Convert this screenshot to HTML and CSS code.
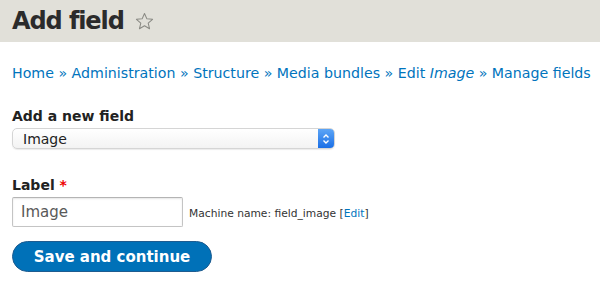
FILE: index.html
```html
<!DOCTYPE html>
<html lang="en">
<head>
  <meta charset="UTF-8">
  <title>Add field</title>
  <link rel="stylesheet" href="styles.css">
</head>
<body>
  <div class="page-header">
    <h1 class="page-title">Add field</h1>
    <span class="shortcut">
      <svg width="19" height="19" viewBox="0 0 20 20">
        <path d="M10 1.6 12.5 7.2 18.5 7.7 13.9 11.7 15.3 17.6 10 14.5 4.7 17.6 6.1 11.7 1.5 7.7 7.5 7.2Z" fill="none" stroke="#8a8a84" stroke-width="1.1" stroke-linejoin="round"/>
      </svg>
    </span>
  </div>

  <div class="content">
    <nav class="breadcrumb">
      <a href="#">Home</a> » <a href="#">Administration</a> » <a href="#">Structure</a> » <a href="#">Media bundles</a> » <a href="#">Edit <em>Image</em></a> » <a href="#">Manage fields</a>
    </nav>

    <form class="field-form">
      <div class="form-item">
        <label class="form-label">Add a new field</label>
        <div class="select">
          <span class="select-value">Image</span>
          <span class="select-arrows">
            <svg width="8" height="12" viewBox="0 0 8 12">
              <path d="M1.5 4.5 4 2 6.5 4.5M1.5 7.5 4 10 6.5 7.5" fill="none" stroke="#fff" stroke-width="1.4"/>
            </svg>
          </span>
        </div>
      </div>

      <div class="form-item form-item-last">
        <label class="form-label">Label <span class="required">*</span></label>
        <div class="label-row">
          <input class="text-input" type="text" value="Image">
          <span class="machine-name">Machine name: field_image [<a href="#">Edit</a>]</span>
        </div>
      </div>

      <button class="button-primary" type="button">Save and continue</button>
    </form>
  </div>
</body>
</html>
```

FILE: styles.css
```css
body {
  margin: 0;
  font-family: "DejaVu Sans", Verdana, sans-serif;
  color: #222;
  background: #fff;
}

a {
  color: #0074bd;
  text-decoration: none;
}

.page-header {
  display: flex;
  align-items: center;
  height: 42px;
  padding: 0 12px;
  background-color: #e1e0d9;
}

.page-title {
  margin: 0;
  font-size: 24px;
  font-weight: bold;
  color: #2b2b2b;
  letter-spacing: -1.1px;
}

.shortcut {
  display: flex;
  margin-left: 11px;
}

.content {
  padding: 23px 12px 0;
}

.breadcrumb {
  font-size: 14.2px;
  color: #0074bd;
  white-space: nowrap;
}

.field-form {
  margin-top: 27px;
}

.form-item {
  margin-bottom: 28px;
}

.form-item-last {
  margin-bottom: 14px;
}

.form-label {
  display: block;
  font-size: 14px;
  font-weight: bold;
  color: #222;
  margin-bottom: 4px;
}

.required {
  color: #e00;
}

.select {
  display: flex;
  align-items: center;
  width: 323px;
  height: 21px;
  box-sizing: border-box;
  border: 1px solid #d5d5d5;
  border-radius: 5px;
  background: linear-gradient(#fff, #f3f3f3);
  box-shadow: 0 1px 1px rgba(0, 0, 0, 0.08);
}

.select-value {
  flex: 1;
  padding-left: 10px;
  font-size: 14px;
  color: #222;
}

.select-arrows {
  display: flex;
  align-items: center;
  justify-content: center;
  width: 16px;
  height: 19px;
  border-radius: 0 4px 4px 0;
  background: linear-gradient(#5da5f6, #1a6fe6);
}

.label-row {
  display: flex;
  align-items: center;
}

.text-input {
  width: 171px;
  height: 30px;
  box-sizing: border-box;
  padding: 0 8px;
  border: 1px solid #c4c4c4;
  border-top-color: #b4b4b4;
  border-radius: 2px;
  font-family: "DejaVu Sans", Verdana, sans-serif;
  font-size: 15px;
  color: #595959;
  box-shadow: inset 0 1px 2px rgba(0, 0, 0, 0.1);
}

.machine-name {
  margin-left: 6px;
  margin-top: 2px;
  font-size: 10.7px;
  color: #333;
}

.button-primary {
  width: 200px;
  height: 31px;
  border: 1px solid #1e5c90;
  border-radius: 16px;
  background: #0071b8;
  color: #fff;
  font-family: "DejaVu Sans", Verdana, sans-serif;
  font-size: 15px;
  font-weight: bold;
  cursor: pointer;
}
```
